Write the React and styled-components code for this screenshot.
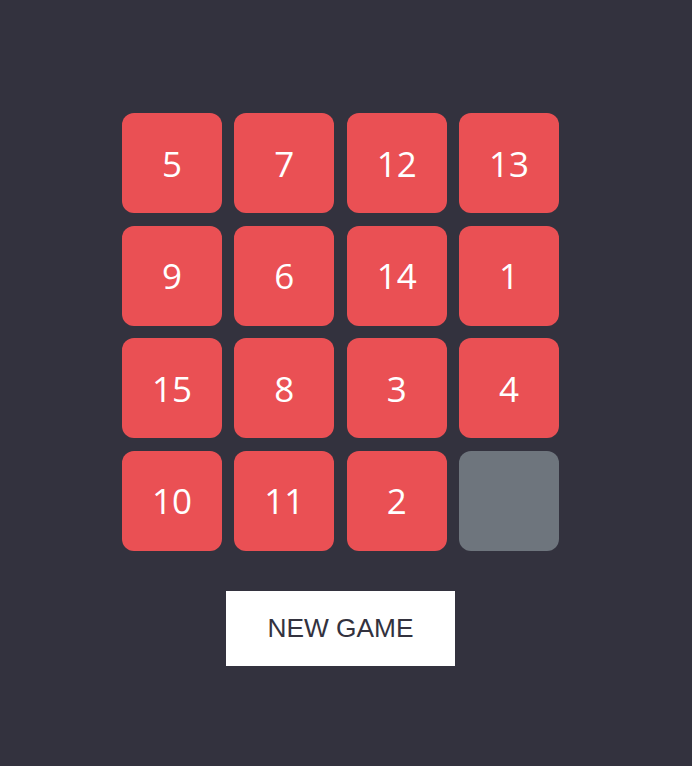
import React from "react";
import styled, { createGlobalStyle } from "styled-components";

const Global = createGlobalStyle`
  html, body { margin: 0; padding: 0; background: #33323e; }
  body { min-height: 766px; }
`;

const Page = styled.main`
  display: flex;
  padding: 113px 0 0 122px;
`;

const Game = styled.div`
  display: flex;
  flex-direction: column;
  align-items: center;
  gap: 40px;
`;

const Board = styled.div`
  display: grid;
  grid-template-columns: repeat(4, 100px);
  grid-auto-rows: 100px;
  column-gap: 12.33px;
  row-gap: 12.67px;
`;

const Tile = styled.div`
  border-radius: 12px;
  background: ${(p) => (p.$empty ? "#6e757d" : "#ea5054")};
  color: #ffffff;
  display: flex;
  align-items: center;
  justify-content: center;
  font-family: "Open Sans", sans-serif;
  font-size: 35px;
  font-weight: 400;
`;

const Button = styled.button`
  width: 229px;
  height: 75px;
  border: none;
  background: #ffffff;
  color: #33323e;
  font-family: "Liberation Sans", Arial, sans-serif;
  font-size: 26.3px;
  cursor: pointer;
  padding: 0;
`;

const tiles = [5, 7, 12, 13, 9, 6, 14, 1, 15, 8, 3, 4, 10, 11, 2, 0];

export default function App() {
  return (
    <>
      <Global />
      <Page>
        <Game>
          <Board>
            {tiles.map((n) => (
              <Tile key={n} $empty={n === 0}>
                {n === 0 ? "" : n}
              </Tile>
            ))}
          </Board>
          <Button>NEW GAME</Button>
        </Game>
      </Page>
    </>
  );
}
